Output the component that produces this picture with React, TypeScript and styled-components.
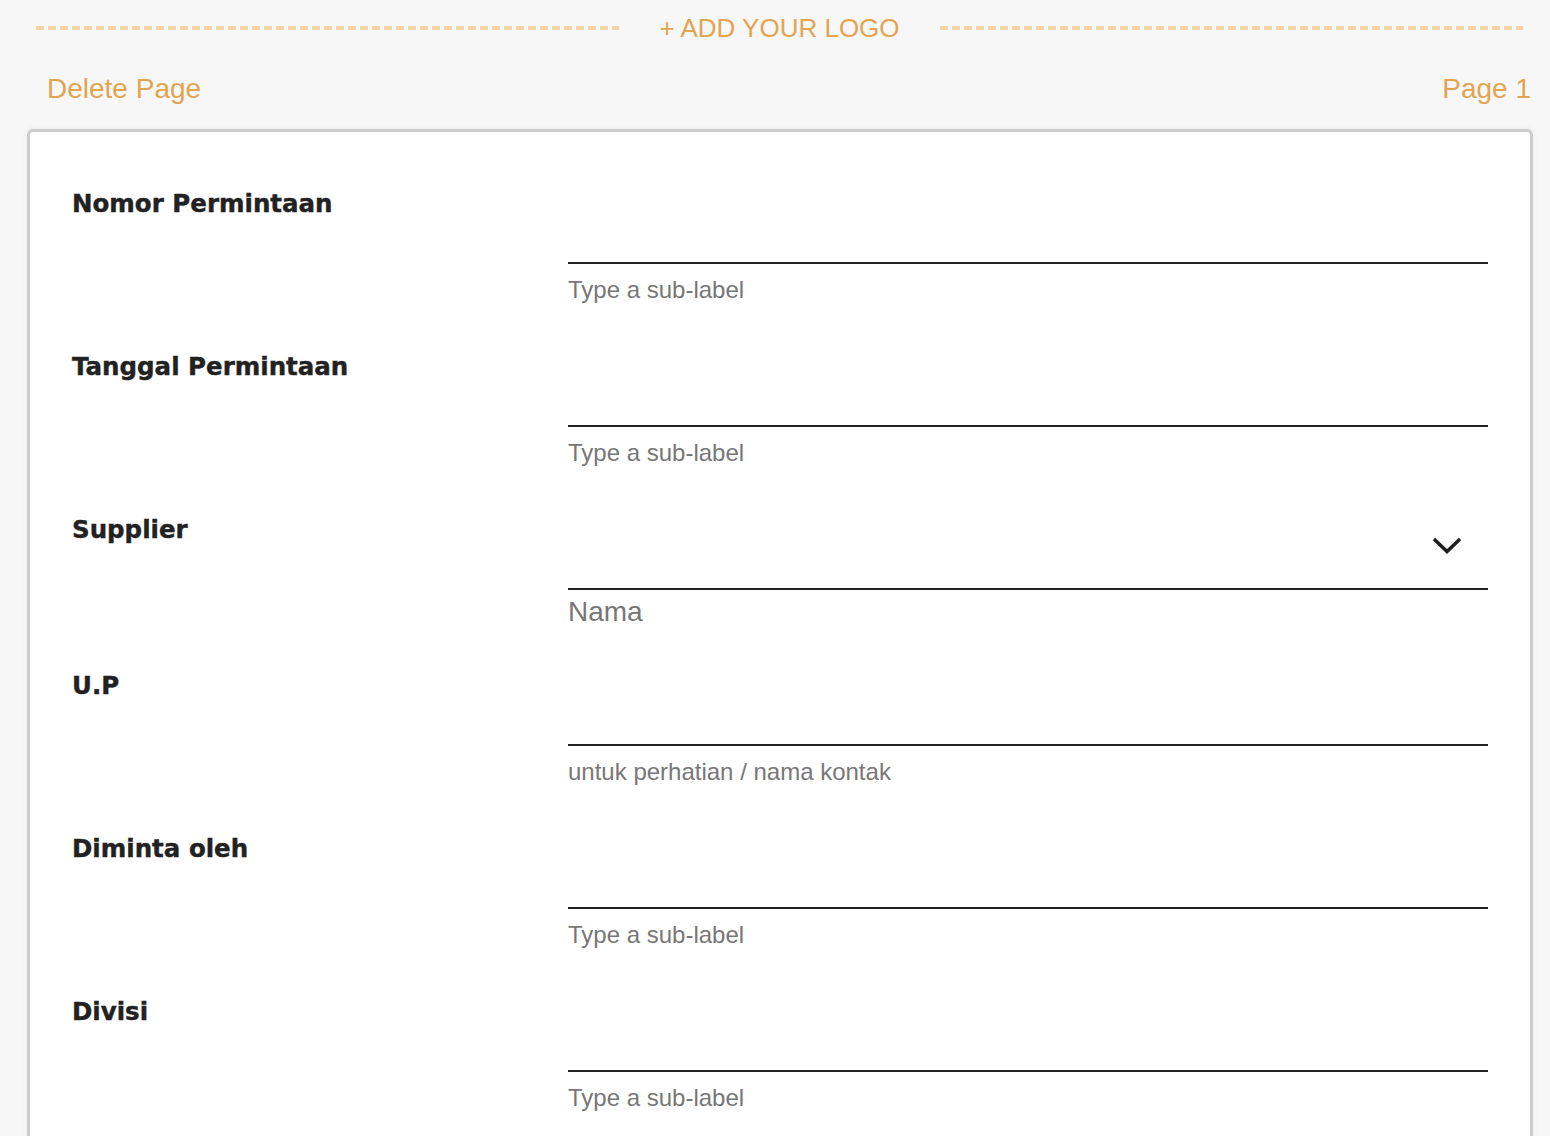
import React from 'react';
import styled, { createGlobalStyle } from 'styled-components';

const GlobalStyle = createGlobalStyle`
  body {
    margin: 0;
    background: #f7f7f7;
    font-family: "Liberation Sans", Arial, sans-serif;
  }
`;

const StyledPage = styled.div`
  padding: 0 17px 0 27px;
`;

const StyledLogoBar = styled.div`
  display: flex;
  align-items: center;
  height: 56px;
  padding: 0 10px 0 9px;
`;

const StyledDash = styled.div`
  flex: 1;
  height: 4px;
  background: repeating-linear-gradient(to right, #f2d4a7 0 8px, transparent 8px 12px);
`;

const StyledLogoButton = styled.button`
  border: none;
  background: none;
  margin: 0 40px;
  padding: 0;
  font-family: "Liberation Sans", Arial, sans-serif;
  font-size: 26px;
  color: #e2a451;
  cursor: pointer;
`;

const StyledPageBar = styled.div`
  display: flex;
  justify-content: space-between;
  padding: 17px 2px 24px 20px;
  font-size: 28px;
  line-height: 32px;
  color: #e2a451;
`;

const StyledCard = styled.section`
  background: #fff;
  border: 3px solid #cccccc;
  border-radius: 6px;
  box-shadow: 0 0 6px rgba(0, 0, 0, 0.06);
  padding: 54px 42px 0 42px;
`;

const StyledRow = styled.div<{ $compact?: boolean }>`
  display: grid;
  grid-template-columns: 496px 1fr;
  margin-bottom: ${(p) => (p.$compact ? '41px' : '46px')};
`;

const StyledLabel = styled.label`
  font-family: "DejaVu Sans", sans-serif;
  font-weight: 700;
  font-size: 24.5px;
  line-height: 36px;
  color: #222;
  -webkit-text-stroke: 0.4px #222;
`;

const StyledInput = styled.div`
  display: flex;
  justify-content: flex-end;
  align-items: flex-start;
  box-sizing: border-box;
  height: 78px;
  border-bottom: 2px solid #222;
  padding: 24px 26px 0 0;
`;

const StyledSubLabel = styled.div<{ $large?: boolean }>`
  margin-top: ${(p) => (p.$large ? '7px' : '13px')};
  font-size: ${(p) => (p.$large ? '28px' : '24px')};
  line-height: ${(p) => (p.$large ? '30px' : '26px')};
  color: #777;
`;

const Chevron = () => (
  <svg width="30" height="18" viewBox="0 0 30 18">
    <path d="M2 3 L15 15.5 L28 3" fill="none" stroke="#1f1f1f" strokeWidth="3.5" />
  </svg>
);

const fields = [
  { label: 'Nomor Permintaan', sub: 'Type a sub-label' },
  { label: 'Tanggal Permintaan', sub: 'Type a sub-label' },
  { label: 'Supplier', sub: 'Nama', select: true },
  { label: 'U.P', sub: 'untuk perhatian / nama kontak' },
  { label: 'Diminta oleh', sub: 'Type a sub-label' },
  { label: 'Divisi', sub: 'Type a sub-label' },
];

function App() {
  return (
    <StyledPage>
      <GlobalStyle />
      <StyledLogoBar>
        <StyledDash />
        <StyledLogoButton>+ ADD YOUR LOGO</StyledLogoButton>
        <StyledDash />
      </StyledLogoBar>
      <StyledPageBar>
        <span>Delete Page</span>
        <span>Page 1</span>
      </StyledPageBar>
      <StyledCard>
        {fields.map((f) => (
          <StyledRow key={f.label} $compact={f.select}>
            <StyledLabel>{f.label}</StyledLabel>
            <div>
              <StyledInput>{f.select && <Chevron />}</StyledInput>
              <StyledSubLabel $large={f.select}>{f.sub}</StyledSubLabel>
            </div>
          </StyledRow>
        ))}
      </StyledCard>
    </StyledPage>
  );
}

export default App;
